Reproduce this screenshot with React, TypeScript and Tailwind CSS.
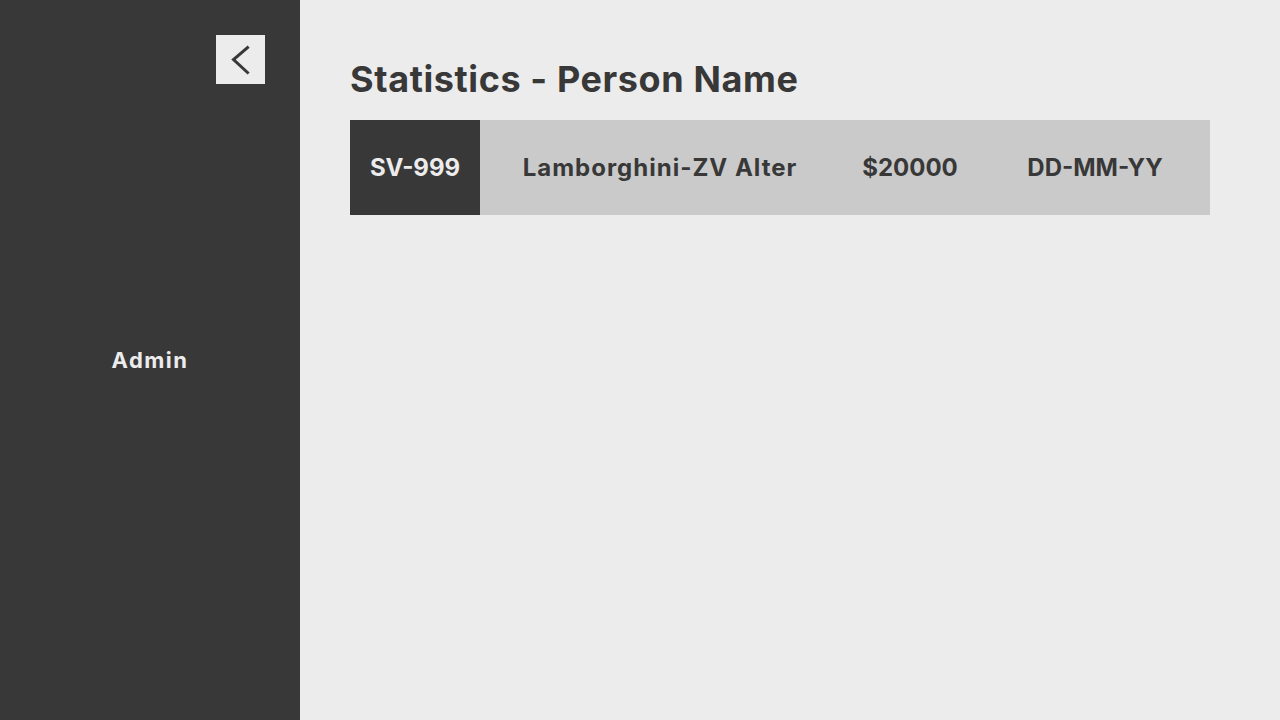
const cells = [
  { label: "Lamborghini-ZV Alter", width: "w-[360px] tracking-[1px]" },
  { label: "$20000", width: "w-[140px]" },
  { label: "DD-MM-YY", width: "w-[230px]" },
];

export default function App() {
  return (
    <div className="flex h-[720px] w-[1280px] font-['Inter',sans-serif] text-[#383838]">
      <aside className="relative flex w-[300px] shrink-0 flex-col items-center justify-center bg-[#383838]">
        <button className="absolute left-[216px] top-[35px] flex h-[49px] w-[49px] items-center justify-center bg-[#ececec]">
          <svg width="49" height="49" viewBox="0 0 49 49" fill="none">
            <path
              d="M31.5 12.5 L17.5 24.5 L31.5 37.5"
              stroke="#383838"
              strokeWidth="3"
              strokeLinecap="square"
              strokeLinejoin="miter"
            />
          </svg>
        </button>
        <span className="text-[22px] font-bold tracking-[1.5px] text-[#ececec]">Admin</span>
      </aside>

      <main className="flex-1 bg-[#ececec] pl-[50px] pr-[70px] pt-[56px]">
        <h1 className="text-[36px] font-bold leading-[46px] tracking-[0.6px]">Statistics - Person Name</h1>
        <div className="mt-[18px] flex h-[95px] w-[860px] bg-[#cacaca] text-[24px] font-bold">
          <div className="flex w-[130px] items-center justify-center bg-[#383838] text-[#ececec]">SV-999</div>
          {cells.map((c) => (
            <div key={c.label} className={`flex ${c.width} items-center justify-center`}>
              {c.label}
            </div>
          ))}
        </div>
      </main>
    </div>
  );
}
